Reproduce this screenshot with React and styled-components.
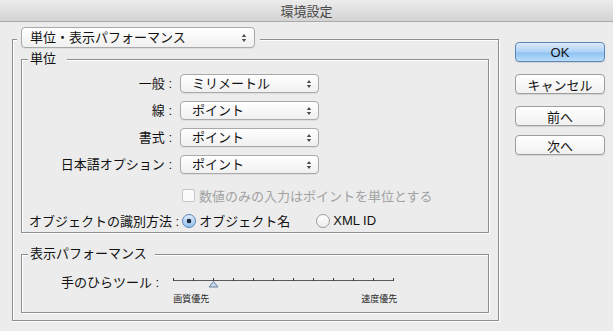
import React from 'react';
import styled, { createGlobalStyle } from 'styled-components';

const GlobalStyle = createGlobalStyle`
  html, body {
    margin: 0;
    padding: 0;
    background: #ececec;
  }
  body {
    font-family: "Liberation Sans", "Noto Sans CJK JP", sans-serif;
    font-size: 13px;
    color: #111;
  }
`;

const Window = styled.div`
  width: 613px;
  height: 331px;
  background: #ececec;
  overflow: hidden;
`;

const TitleBar = styled.div`
  height: 21px;
  border-bottom: 1px solid #aaaaaa;
  background: linear-gradient(#ececec, #d3d3d3);
  display: flex;
  align-items: center;
  justify-content: center;
  color: #474747;
  font-size: 13px;
`;

const Body = styled.div`
  display: flex;
  align-items: flex-start;
  padding: 17px 0 0 12px;
`;

const Outer = styled.div`
  position: relative;
  box-sizing: border-box;
  width: 487px;
  height: 282px;
  border: 1px solid #8e8e8e;
  box-shadow: 1px 1px 0 #fff, inset 1px 1px 0 #fff;
  padding: 19px 9px 7px 8px;
`;

const Legend = styled.div`
  position: absolute;
  top: -13px;
  left: 4px;
  padding: 0 5px 0 4px;
  background: #ececec;
`;

const Popup = styled.div`
  box-sizing: border-box;
  width: ${(p) => p.$width}px;
  height: ${(p) => p.$height}px;
  border: 1px solid #a9a9a9;
  border-radius: 4px;
  background: linear-gradient(#ffffff, #f0f0f0);
  box-shadow: 0 1px 0 rgba(0, 0, 0, 0.06);
  display: flex;
  align-items: center;
  justify-content: space-between;
  padding: 0 ${(p) => p.$padRight}px 0 ${(p) => p.$padLeft}px;
  line-height: 1;
`;

const Group = styled.div`
  position: relative;
  box-sizing: border-box;
  height: ${(p) => p.$height}px;
  margin-top: ${(p) => p.$gap || 0}px;
  border: 1px solid #8e8e8e;
  box-shadow: 1px 1px 0 #fff, inset 1px 1px 0 #fff;
`;

const GroupTitle = styled.span`
  position: absolute;
  top: -10px;
  left: 6px;
  padding: 0 ${(p) => p.$padRight}px 0 2px;
  background: #ececec;
  line-height: 18px;
`;

const Fields = styled.div`
  display: grid;
  grid-template-columns: 150px 139px;
  column-gap: 8px;
  row-gap: 8px;
  align-items: center;
  padding-top: 14px;
`;

const Label = styled.span`
  text-align: right;
  line-height: 19px;
`;

const CheckRow = styled.div`
  grid-column: 2 / span 1;
  display: flex;
  align-items: center;
  gap: 4px;
  height: 19px;
  margin-top: 4px;
  margin-left: 2px;
  white-space: nowrap;
  color: #a2a2a2;
`;

const Checkbox = styled.span`
  box-sizing: border-box;
  width: 13px;
  height: 13px;
  border: 1px solid #c6c6c6;
  border-radius: 2px;
  background: #fbfbfb;
  flex: none;
`;

const RadioRow = styled.div`
  display: flex;
  align-items: center;
  height: 19px;
  margin-top: 6px;
  padding-left: 7px;
  white-space: nowrap;
`;

const RadioOption = styled.span`
  display: flex;
  align-items: center;
  gap: 3px;
  margin-left: ${(p) => p.$gap}px;
`;

const Radio = styled.span`
  box-sizing: border-box;
  width: 14px;
  height: 14px;
  border-radius: 50%;
  flex: none;
  border: 1px solid ${(p) => (p.$checked ? '#5b82b3' : '#9c9c9c')};
  background: ${(p) =>
    p.$checked
      ? 'radial-gradient(circle, #1d2a38 0 2px, transparent 2.6px), linear-gradient(#dbeafb, #93c1ee)'
      : 'linear-gradient(#ffffff, #ececec)'};
`;

const HandRow = styled.div`
  display: flex;
  align-items: flex-start;
  padding: 20px 0 0 39px;
`;

const HandLabel = styled.span`
  line-height: 16px;
`;

const Slider = styled.div`
  width: 224px;
  margin: 1px 0 0 14px;
  display: flex;
  flex-direction: column;
`;

const SliderLabels = styled.div`
  display: flex;
  justify-content: space-between;
  margin-top: 5px;
  font-size: 9px;
  line-height: 12px;
  color: #2a2a2a;
`;

const Buttons = styled.div`
  display: flex;
  flex-direction: column;
  margin: 3px 0 0 16px;
`;

const Button = styled.div`
  box-sizing: border-box;
  width: 90px;
  height: 20px;
  margin-top: ${(p) => p.$gap || 0}px;
  border-radius: 4px;
  display: flex;
  align-items: center;
  justify-content: center;
  font-size: 13px;
  color: #111;
  border: 1px solid ${(p) => (p.$primary ? '#5f86b8' : '#9e9e9e')};
  background: ${(p) =>
    p.$primary
      ? 'linear-gradient(#dcecfc 0%, #acd1f6 50%, #8fc2f2 55%, #b9ddfb 100%)'
      : 'linear-gradient(#ffffff, #f1f1f1)'};
  box-shadow: 0 1px 1px rgba(0, 0, 0, 0.1);
`;

const Arrows = () => (
  <svg width="6" height="10" viewBox="0 0 6 10">
    <polygon points="0.8,4 3,1 5.2,4" fill="#4a4a4a" />
    <polygon points="0.8,6 3,9 5.2,6" fill="#4a4a4a" />
  </svg>
);

const Select = ({ value }) => (
  <Popup $width={139} $height={19} $padLeft={11} $padRight={6}>
    <span>{value}</span>
    <Arrows />
  </Popup>
);

const SliderTrack = () => {
  const ticks = Array.from({ length: 12 }, (_, i) => 0.5 + i * 20);
  return (
    <svg width="224" height="12" viewBox="0 0 224 12">
      <line x1="0.5" y1="4.5" x2="220.5" y2="4.5" stroke="#5a5a5a" strokeWidth="1" />
      {ticks.map((x) => (
        <line key={x} x1={x} y1="2" x2={x} y2="5" stroke="#3c3c3c" strokeWidth="1" />
      ))}
      <polygon points="40.5,5.5 36,11 45,11" fill="#c9d9ec" stroke="#6b819d" strokeWidth="1" />
    </svg>
  );
};

const units = [
  ['一般 :', 'ミリメートル'],
  ['線 :', 'ポイント'],
  ['書式 :', 'ポイント'],
  ['日本語オプション :', 'ポイント'],
];

export default function App() {
  return (
    <>
      <GlobalStyle />
      <Window>
        <TitleBar>環境設定</TitleBar>
        <Body>
          <Outer>
            <Legend>
              <Popup $width={234} $height={21} $padLeft={8} $padRight={7}>
                <span>単位・表示パフォーマンス</span>
                <Arrows />
              </Popup>
            </Legend>

            <Group $height={174}>
              <GroupTitle $padRight={11}>単位</GroupTitle>
              <Fields>
                {units.map(([label, value]) => (
                  <React.Fragment key={label}>
                    <Label>{label}</Label>
                    <Select value={value} />
                  </React.Fragment>
                ))}
                <CheckRow>
                  <Checkbox />
                  数値のみの入力はポイントを単位とする
                </CheckRow>
              </Fields>
              <RadioRow>
                <span>オブジェクトの識別方法 :</span>
                <RadioOption $gap={3}>
                  <Radio $checked />
                  オブジェクト名
                </RadioOption>
                <RadioOption $gap={26}>
                  <Radio />
                  XML ID
                </RadioOption>
              </RadioRow>
            </Group>

            <Group $height={59} $gap={21}>
              <GroupTitle $padRight={8}>表示パフォーマンス</GroupTitle>
              <HandRow>
                <HandLabel>手のひらツール :</HandLabel>
                <Slider>
                  <SliderTrack />
                  <SliderLabels>
                    <span>画質優先</span>
                    <span>速度優先</span>
                  </SliderLabels>
                </Slider>
              </HandRow>
            </Group>
          </Outer>

          <Buttons>
            <Button $primary>OK</Button>
            <Button $gap={12}>キャンセル</Button>
            <Button $gap={12}>前へ</Button>
            <Button $gap={9}>次へ</Button>
          </Buttons>
        </Body>
      </Window>
    </>
  );
}
